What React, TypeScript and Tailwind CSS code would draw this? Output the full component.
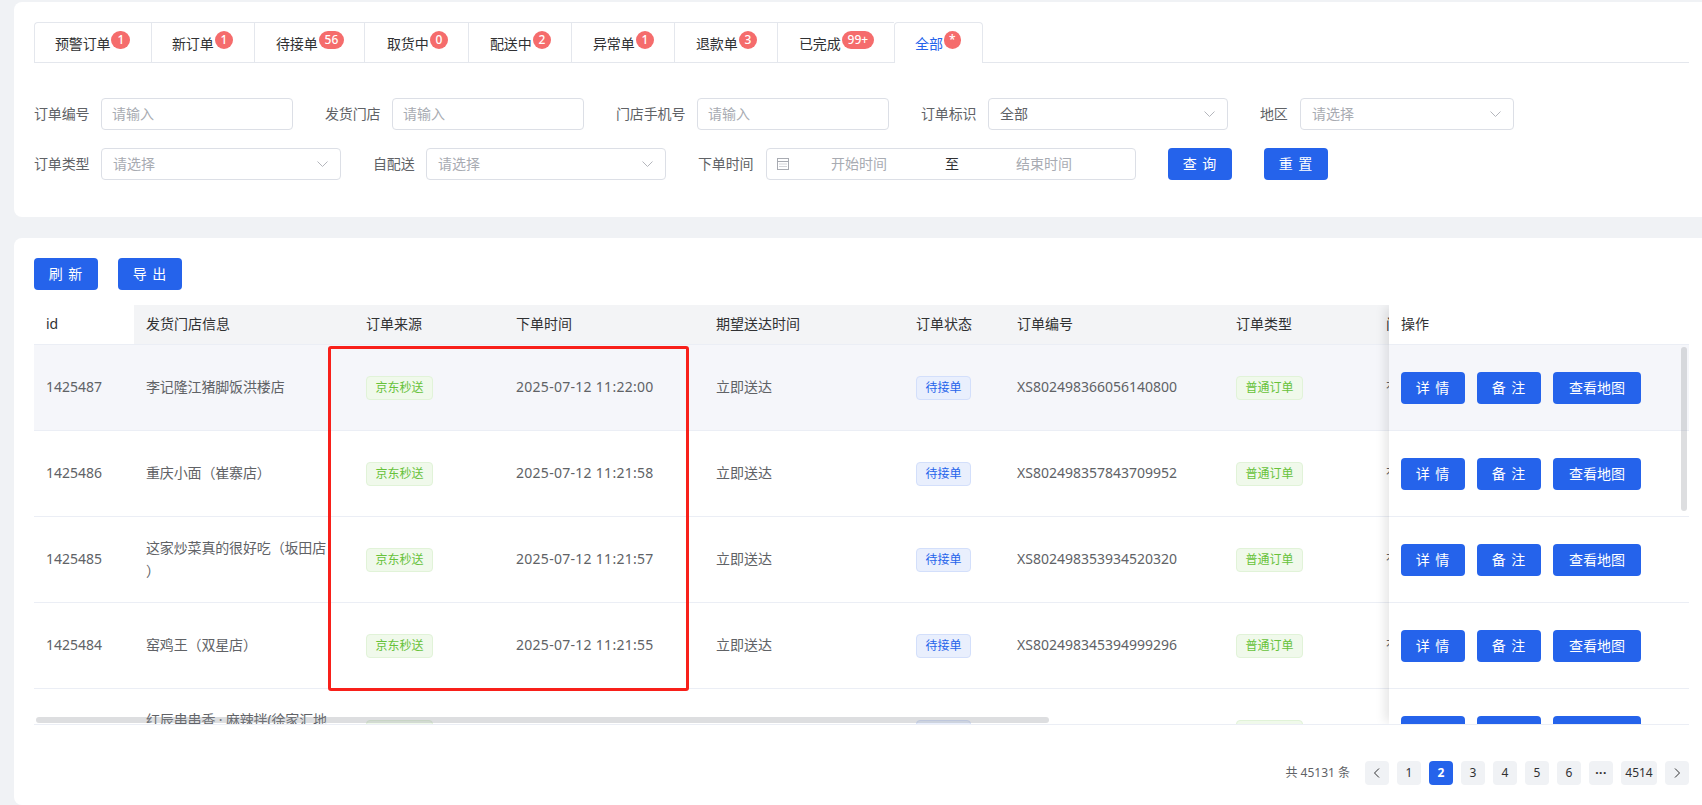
const font = "font-['Noto_Sans','Noto_Sans_CJK_SC',sans-serif]";

const tabs = [
  { label: "预警订单", badge: "1", w: "w-[117px]", pl: "pl-5" },
  { label: "新订单", badge: "1", w: "w-[103px]", pl: "pl-5" },
  { label: "待接单", badge: "56", w: "w-[110px]", pl: "pl-[21px]" },
  { label: "取货中", badge: "0", w: "w-[104px]", pl: "pl-[22px]" },
  { label: "配送中", badge: "2", w: "w-[103px]", pl: "pl-[21px]" },
  { label: "异常单", badge: "1", w: "w-[103px]", pl: "pl-[21px]" },
  { label: "退款单", badge: "3", w: "w-[103px]", pl: "pl-[21px]" },
  { label: "已完成", badge: "99+", w: "w-[117px]", pl: "pl-[21px]" },
];

const rows = [
  { id: "1425487", store: "李记隆江猪脚饭洪楼店", time: "2025-07-12 11:22:00", no: "XS802498366056140800" },
  { id: "1425486", store: "重庆小面（崔寨店）", time: "2025-07-12 11:21:58", no: "XS802498357843709952" },
  { id: "1425485", store: "这家炒菜真的很好吃（坂田店）", time: "2025-07-12 11:21:57", no: "XS802498353934520320" },
  { id: "1425484", store: "窑鸡王（双星店）", time: "2025-07-12 11:21:55", no: "XS802498345394999296" },
  { id: "1425483", store: "红辰串串香 · 麻辣拌(徐家汇地铁站店)", time: "2025-07-12 11:21:52", no: "XS802498332145672192" },
];

function Chevron() {
  return (
    <svg width="11" height="6" viewBox="0 0 11 6" fill="none" stroke="#b4b6bc" strokeWidth="1">
      <path d="M0.5 0.5 L5.5 5.5 L10.5 0.5" />
    </svg>
  );
}

function Calendar() {
  return (
    <svg width="12" height="12" viewBox="0 0 12 12" fill="none" stroke="#a8abb2" strokeWidth="1">
      <rect x="0.5" y="0.5" width="11" height="11" />
      <path d="M0.5 3.5 H11.5" />
      <path d="M2.5 6 H9.5 M2.5 8.5 H9.5" strokeDasharray="1 1" />
    </svg>
  );
}

function Btn({ children, w = "w-16 tracking-[1px]" }: { children: React.ReactNode; w?: string }) {
  return (
    <button className={`${w} h-8 shrink-0 rounded bg-[#2563eb] text-sm text-white flex items-center justify-center`}>
      {children}
    </button>
  );
}

function Label({ children, w }: { children: React.ReactNode; w: string }) {
  return <span className={`${w} shrink-0 text-sm tracking-[-0.15px] text-[#606266]`}>{children}</span>;
}

function Input({ w = "w-[192px]" }: { w?: string }) {
  return (
    <div className={`${w} h-8 shrink-0 rounded border border-[#dcdfe6] pl-[10px] flex items-center text-sm text-[#a8abb2]`}>
      请输入
    </div>
  );
}

function Select({ w, value, placeholder = "请选择" }: { w: string; value?: string; placeholder?: string }) {
  return (
    <div className={`${w} h-8 shrink-0 rounded border border-[#dcdfe6] pl-[11px] pr-3 flex items-center justify-between text-sm`}>
      <span className={value ? "text-[#606266]" : "text-[#a8abb2]"}>{value ?? placeholder}</span>
      <Chevron />
    </div>
  );
}

function Tag({ children, color }: { children: React.ReactNode; color: "green" | "blue" }) {
  const cls =
    color === "green"
      ? "bg-[#f0f9eb] border-[#e1f3d8] text-[#67c23a]"
      : "bg-[#e9effd] border-[#d3dffb] text-[#2563eb]";
  return <span className={`inline-flex h-6 items-center rounded border px-[8.5px] text-xs ${cls}`}>{children}</span>;
}

function PageBtn({ children, active, w = "w-6" }: { children: React.ReactNode; active?: boolean; w?: string }) {
  return (
    <span
      className={`${w} h-6 rounded flex items-center justify-center text-xs ${
        active ? "bg-[#2563eb] text-white font-bold" : "bg-[#f0f2f5] text-[#303133]"
      }`}
    >
      {children}
    </span>
  );
}

export default function App() {
  return (
    <div className={`${font} relative h-[805px] w-[1702px] overflow-hidden bg-[#f0f2f5] pl-[14px] pt-[2px]`}>
      {/* filter card */}
      <div className="h-[215px] rounded-l-lg bg-white pl-5 pr-[13px] pt-5">
        <div className="flex h-[41px] border-b border-[#e4e7ed]">
          {tabs.map((t, i) => (
            <div
              key={t.label}
              className={`${t.w} ${t.pl} h-10 border-t border-l border-[#e4e7ed] pt-[2px] flex items-center text-sm tracking-[-0.15px] text-[#303133] ${
                i === 0 ? "rounded-tl" : ""
              }`}
            >
              <span>{t.label}</span>
              <span className="-mt-[8px] ml-px h-[18px] rounded-full bg-[#f56c6c] px-[6px] text-xs font-medium leading-[18px] tracking-normal text-white">
                {t.badge}
              </span>
            </div>
          ))}
          <div className="w-[89px] h-[41px] border-t border-x border-[#e4e7ed] rounded-t bg-white pl-5 pt-[2px] flex items-center text-sm text-[#2563eb]">
            <span>全部</span>
            <span className="-mt-[8px] ml-px h-[18px] rounded-full bg-[#f56c6c] px-[5px] text-xs font-medium leading-[18px] text-white">
              *
            </span>
          </div>
        </div>

        <div className="mt-[35px] flex items-center gap-8">
          <div className="flex items-center">
            <Label w="w-[67px]">订单编号</Label>
            <Input />
          </div>
          <div className="flex items-center">
            <Label w="w-[67px]">发货门店</Label>
            <Input />
          </div>
          <div className="flex items-center">
            <Label w="w-[81px]">门店手机号</Label>
            <Input />
          </div>
          <div className="flex items-center">
            <Label w="w-[67px]">订单标识</Label>
            <Select w="w-[240px]" value="全部" />
          </div>
          <div className="flex items-center">
            <Label w="w-[40px]">地区</Label>
            <Select w="w-[214px]" />
          </div>
        </div>

        <div className="mt-[18px] flex items-center gap-8">
          <div className="flex items-center">
            <Label w="w-[67px]">订单类型</Label>
            <Select w="w-[240px]" />
          </div>
          <div className="flex items-center">
            <Label w="w-[53px]">自配送</Label>
            <Select w="w-[240px]" />
          </div>
          <div className="flex items-center">
            <Label w="w-[68px]">下单时间</Label>
            <div className="w-[370px] h-8 rounded border border-[#dcdfe6] pl-[10px] flex items-center text-sm text-[#a8abb2]">
              <Calendar />
              <span className="w-[140px] text-center">开始时间</span>
              <span className="w-[46px] text-center text-[#303133]">至</span>
              <span className="w-[138px] text-center">结束时间</span>
            </div>
          </div>
          <Btn>查 询</Btn>
          <Btn>重 置</Btn>
        </div>
      </div>

      {/* table card */}
      <div className="mt-[21px] h-[567px] rounded-l-lg bg-white pl-5 pr-[13px] pt-5">
        <div className="flex gap-5">
          <Btn>刷 新</Btn>
          <Btn>导 出</Btn>
        </div>

        <div className="relative mt-[15px] flex h-[420px] border-b border-[#ebeef5] text-sm text-[#606266]">
          <div className="w-[1355px] shrink-0 overflow-hidden">
            <div className="flex h-10 w-[1500px] border-b border-[#ebeef5] pb-[2px] text-[#303133]">
              <div className="w-[100px] pl-3 flex items-center bg-white">id</div>
              <div className="-mb-[2px] flex flex-1 items-center bg-[#f3f4f6] pb-[2px]">
                <span className="w-[220px] pl-3">发货门店信息</span>
                <span className="w-[150px] pl-3">订单来源</span>
                <span className="w-[200px] pl-3">下单时间</span>
                <span className="w-[200px] pl-3">期望送达时间</span>
                <span className="w-[101px] pl-3">订单状态</span>
                <span className="w-[219px] pl-3">订单编号</span>
                <span className="w-[150px] pl-3">订单类型</span>
                <span className="pl-3">门店手机号</span>
              </div>
            </div>
            {rows.map((r, i) => (
              <div
                key={r.id}
                className={`flex h-[86px] w-[1500px] items-center border-b border-[#ebeef5] ${i === 0 ? "bg-[#f5f6fa]" : ""}`}
              >
                <span className="-mt-[2px] w-[100px] pl-3">{r.id}</span>
                <span className="-mt-[2px] w-[220px] pl-3 pr-6 leading-[23px] tracking-[-0.15px] [line-break:anywhere]">
                  {r.store}
                </span>
                <span className="w-[150px] pl-3">
                  <Tag color="green">京东秒送</Tag>
                </span>
                <span className="-mt-[2px] w-[200px] pl-3 tracking-[0.28px]">{r.time}</span>
                <span className="-mt-[2px] w-[200px] pl-3">立即送达</span>
                <span className="w-[101px] pl-3">
                  <Tag color="blue">待接单</Tag>
                </span>
                <span className="-mt-[2px] w-[219px] pl-3">{r.no}</span>
                <span className="w-[150px] pl-3">
                  <Tag color="green">普通订单</Tag>
                </span>
                <span className="-mt-[2px] pl-3">有备注</span>
              </div>
            ))}
          </div>

          <div className="relative w-[300px] shrink-0 overflow-hidden bg-white shadow-[-6px_0_10px_-2px_rgba(0,0,0,0.1)] [clip-path:inset(0_0_0_-14px)]">
            <div className="flex h-10 items-center border-b border-[#ebeef5] pb-[2px] pl-3 text-[#303133]">操作</div>
            {rows.map((r, i) => (
              <div
                key={r.id}
                className={`flex h-[86px] items-center gap-3 border-b border-[#ebeef5] pl-3 ${i === 0 ? "bg-[#f5f6fa]" : ""}`}
              >
                <Btn>详 情</Btn>
                <Btn>备 注</Btn>
                <Btn w="w-[88px]">查看地图</Btn>
              </div>
            ))}
          </div>

          {/* scrollbars */}
          <div className="absolute left-[2px] top-[412px] h-[6px] w-[1013px] rounded-full bg-[#909399]/30" />
          <div className="absolute right-[2px] top-[42px] h-[164px] w-[6px] rounded-full bg-[#909399]/30" />
        </div>

        <div className="mt-9 flex items-center justify-end gap-2">
          <span className="mr-[7px] text-xs text-[#606266]">共 45131 条</span>
          <PageBtn>
            <svg width="8" height="10" viewBox="0 0 8 10" fill="none" stroke="#303133" strokeWidth="1">
              <path d="M6 0.5 L1.5 5 L6 9.5" />
            </svg>
          </PageBtn>
          <PageBtn>1</PageBtn>
          <PageBtn active>2</PageBtn>
          <PageBtn>3</PageBtn>
          <PageBtn>4</PageBtn>
          <PageBtn>5</PageBtn>
          <PageBtn>6</PageBtn>
          <PageBtn>
            <span className="font-bold leading-none tracking-[0.5px]">···</span>
          </PageBtn>
          <PageBtn w="w-9">4514</PageBtn>
          <PageBtn>
            <svg width="8" height="10" viewBox="0 0 8 10" fill="none" stroke="#303133" strokeWidth="1">
              <path d="M2 0.5 L6.5 5 L2 9.5" />
            </svg>
          </PageBtn>
        </div>
      </div>

      {/* red annotation box */}
      <div className="absolute left-[328px] top-[346px] h-[345px] w-[361px] rounded-[3px] border-[3px] border-[#f8201a]" />
    </div>
  );
}
